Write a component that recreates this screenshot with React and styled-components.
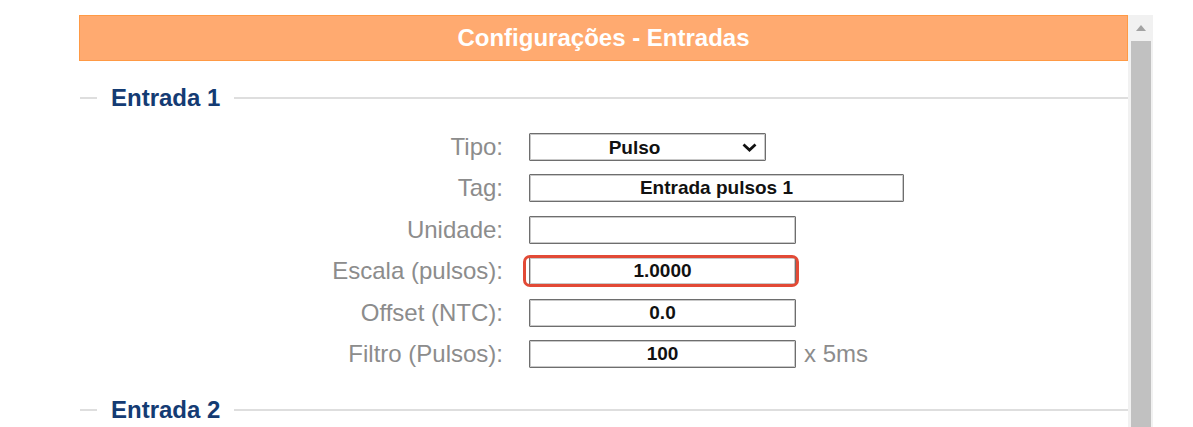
import React from "react";
import styled, { createGlobalStyle } from "styled-components";

const GlobalStyle = createGlobalStyle`
  html, body {
    margin: 0;
    padding: 0;
    background: #fff;
    font-family: "Liberation Sans", Arial, sans-serif;
  }
`;

const Page = styled.div`
  display: flex;
  padding-left: 79px;
  height: 427px;
  overflow: hidden;
`;

const Main = styled.div`
  width: 1049px;
  padding-top: 15px;
`;

const Header = styled.div`
  height: 44px;
  background: #ffaa70;
  border: 1px solid #ff9a45;
  color: #fff;
  font-size: 24px;
  font-weight: bold;
  display: flex;
  align-items: center;
  justify-content: center;
`;

const Legend = styled.div`
  display: flex;
  align-items: center;
  height: 40px;
  margin-top: ${(p) => p.$top}px;
  padding-left: 1px;

  &::before,
  &::after {
    content: "";
    height: 2px;
    background: #dedede;
  }
  &::before {
    width: 17px;
  }
  &::after {
    flex: 1;
  }
`;

const LegendText = styled.span`
  padding: 0 14px;
  font-size: 24px;
  font-weight: bold;
  color: #143b73;
`;

const Form = styled.div`
  display: flex;
  flex-direction: column;
  gap: 13.4px;
  margin-top: 15px;
  margin-bottom: 22px;
`;

const Row = styled.div`
  display: grid;
  grid-template-columns: 424px auto auto;
  column-gap: 26px;
  align-items: center;
  height: 28px;
`;

const Label = styled.label`
  text-align: right;
  font-size: 24px;
  color: #8c8c8c;
`;

const Field = styled.div`
  position: relative;
  display: flex;
  align-items: center;
  gap: 8px;
`;

const Input = styled.input`
  box-sizing: border-box;
  width: ${(p) => p.$w}px;
  height: 28px;
  border: 1px solid #6e6e6e;
  box-shadow: inset 0 0 0 1px #c9c9c9;
  border-radius: 1px;
  font-family: "Liberation Sans", Arial, sans-serif;
  font-size: 19px;
  font-weight: bold;
  color: #111;
  text-align: center;
  padding: 0;
  background: #fff;
  outline: none;
`;

const Select = styled.select`
  box-sizing: border-box;
  appearance: none;
  width: ${(p) => p.$w}px;
  height: 28px;
  border: 1px solid #6e6e6e;
  box-shadow: inset 0 0 0 1px #c9c9c9;
  border-radius: 1px;
  font-family: "Liberation Sans", Arial, sans-serif;
  font-size: 19px;
  font-weight: bold;
  color: #111;
  text-align-last: center;
  padding: 0 26px 0 0;
  background: #fff;
`;

const Chevron = styled.svg`
  position: absolute;
  left: 213px;
  top: 10px;
  pointer-events: none;
`;

const Highlight = styled.span`
  position: absolute;
  left: -6px;
  top: -2px;
  width: 270px;
  height: 26px;
  border: 3px solid #e24a36;
  border-radius: 7px;
  pointer-events: none;
`;

const Suffix = styled.span`
  font-size: 24px;
  color: #8c8c8c;
`;

const ScrollBar = styled.div`
  margin-top: 15px;
  width: 25px;
  background: #f1f1f1;
  display: flex;
  flex-direction: column;
  align-items: center;
`;

const ScrollArrow = styled.div`
  height: 26px;
  display: flex;
  align-items: center;
  justify-content: center;
`;

const Thumb = styled.div`
  width: 20px;
  flex: 1;
  background: #c1c1c1;
`;

const rows = [
  { label: "Tipo:", select: true, value: "Pulso", w: 237 },
  { label: "Tag:", value: "Entrada pulsos 1", w: 375 },
  { label: "Unidade:", value: "", w: 267 },
  { label: "Escala (pulsos):", value: "1.0000", w: 267, mark: true },
  { label: "Offset (NTC):", value: "0.0", w: 267 },
  { label: "Filtro (Pulsos):", value: "100", w: 267, suffix: "x 5ms" },
];

export default function App() {
  return (
    <>
      <GlobalStyle />
      <Page>
        <Main>
          <Header>Configurações - Entradas</Header>
          <Legend $top={17}>
            <LegendText>Entrada 1</LegendText>
          </Legend>
          <Form>
            {rows.map((r) => (
              <Row key={r.label}>
                <Label>{r.label}</Label>
                <Field>
                  {r.select ? (
                    <>
                      <Select $w={r.w} defaultValue={r.value}>
                        <option>Pulso</option>
                        <option>Analógica</option>
                      </Select>
                      <Chevron width="15" height="9" viewBox="0 0 15 9">
                        <path
                          d="M1.5 1.5 L7.5 7 L13.5 1.5"
                          fill="none"
                          stroke="#111"
                          strokeWidth="2.8"
                        />
                      </Chevron>
                    </>
                  ) : (
                    <Input $w={r.w} defaultValue={r.value} />
                  )}
                  {r.mark && <Highlight />}
                  {r.suffix && <Suffix>{r.suffix}</Suffix>}
                </Field>
              </Row>
            ))}
          </Form>
          <Legend $top={0}>
            <LegendText>Entrada 2</LegendText>
          </Legend>
        </Main>
        <ScrollBar>
          <ScrollArrow>
            <svg width="10" height="6" viewBox="0 0 10 6">
              <path d="M0 6 L5 0 L10 6 Z" fill="#a3a3a3" />
            </svg>
          </ScrollArrow>
          <Thumb />
        </ScrollBar>
      </Page>
    </>
  );
}
